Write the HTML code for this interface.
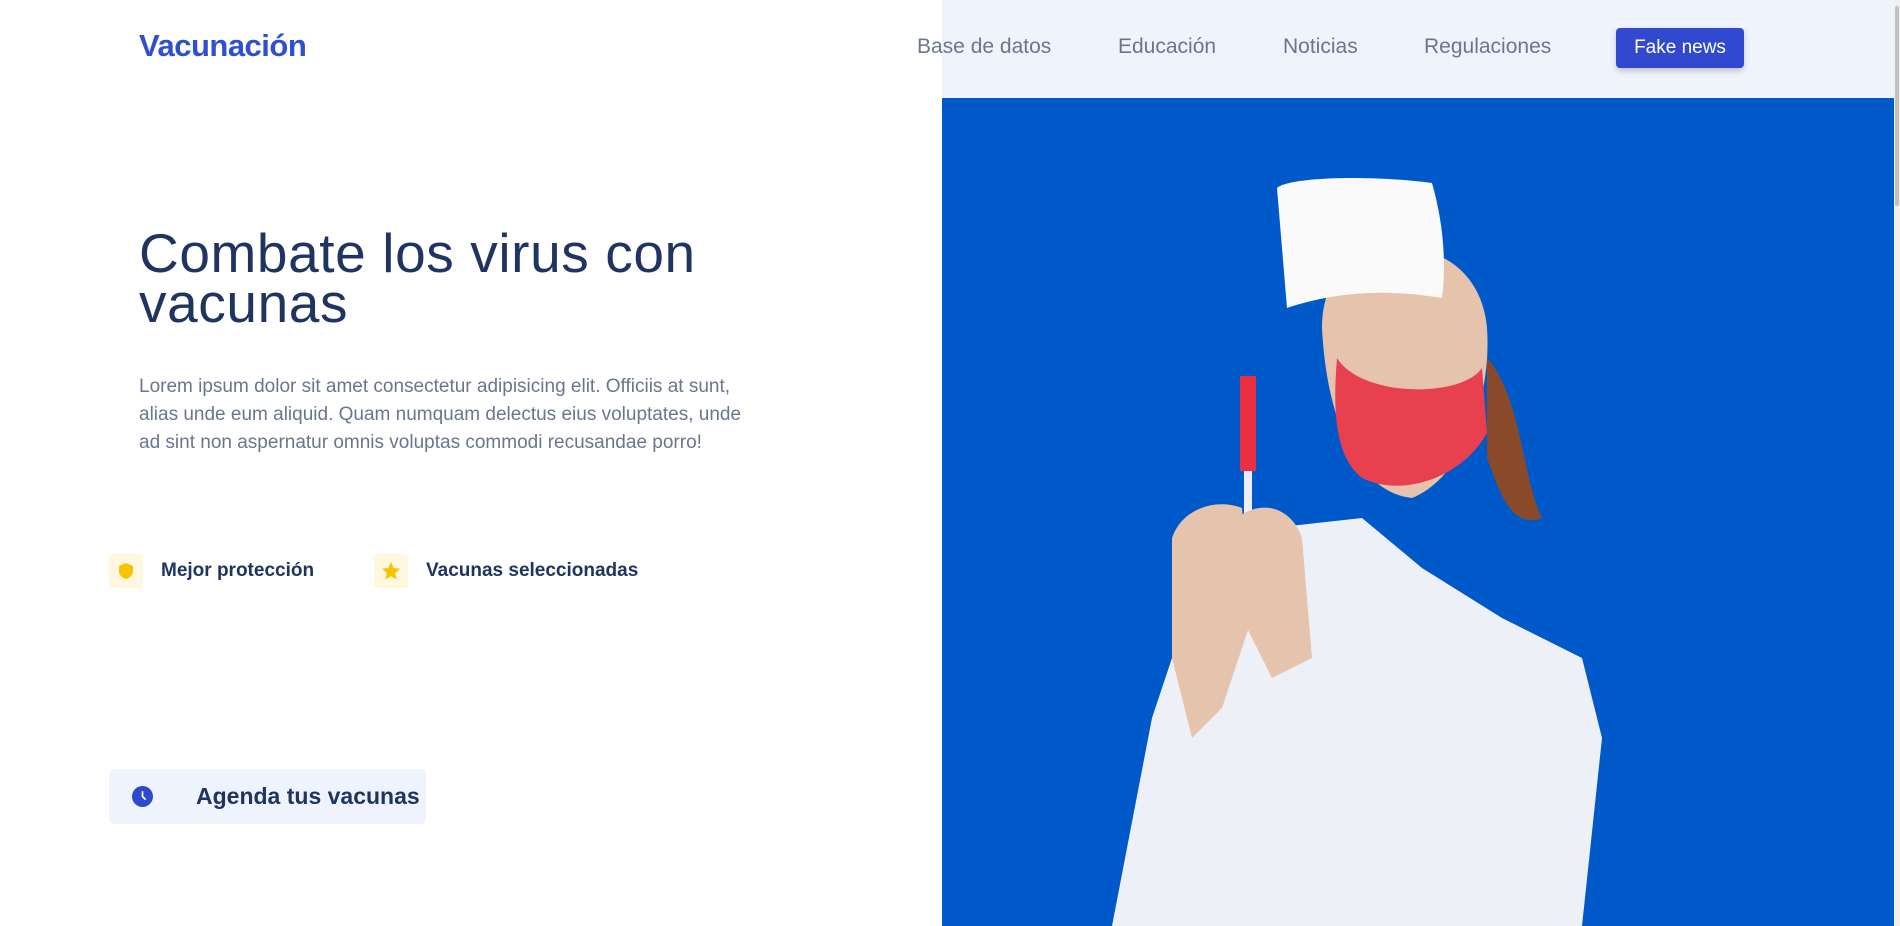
<!DOCTYPE html>
<html><head><meta charset="utf-8"><style>
*{margin:0;padding:0;box-sizing:border-box}
body{width:1900px;height:926px;overflow:hidden;background:#fff;font-family:"Liberation Sans",sans-serif;position:relative}
.logo{position:absolute;left:139px;top:28px;font-size:31px;font-weight:bold;color:#2f4fcf;letter-spacing:-0.5px}
.hdr{position:absolute;left:942px;top:0;width:952px;height:98px;background:#eff3fb}
.nav{position:absolute;top:35px;font-size:21px;color:#6b7591}
.btn{position:absolute;left:1616px;top:28px;width:128px;height:40px;background:#3049cf;color:#fff;font-size:19px;border-radius:4px;text-align:center;line-height:40px;box-shadow:0 3px 6px rgba(0,0,0,.2)}
.pic{position:absolute;left:942px;top:98px;width:952px;height:828px;background:#0059c8;overflow:hidden}
.sb{position:absolute;right:0;top:0;width:6px;height:926px;background:#f0f0f0}
.sb div{position:absolute;left:1px;top:6px;width:4px;height:200px;background:#c1c1c1;border-radius:2px}
h1{position:absolute;left:139px;top:228px;font-size:55px;line-height:50px;color:#1f3461;font-weight:normal;letter-spacing:0.6px;width:700px}
p{position:absolute;left:139px;top:373px;width:800px;font-size:19px;line-height:28px;color:#6a7690;white-space:nowrap}
.f{position:absolute;top:554px;display:flex;align-items:center;font-size:19px;font-weight:bold;color:#1f3461}
.ic{width:34px;height:34px;background:#fff7de;border-radius:3px;margin-right:18px;display:flex;align-items:center;justify-content:center}
.ag{position:absolute;left:109px;top:769px;width:317px;height:55px;background:#eef3fd;border-radius:6px;font-size:23px;font-weight:bold;color:#1f3461;line-height:55px}
</style></head><body>
<div class="logo">Vacunación</div>
<div class="hdr"></div>
<div class="nav" style="left:917px">Base de datos</div>
<div class="nav" style="left:1118px">Educación</div>
<div class="nav" style="left:1283px">Noticias</div>
<div class="nav" style="left:1424px">Regulaciones</div>
<div class="btn">Fake news</div>
<h1>Combate los virus con<br>vacunas</h1>
<p>Lorem ipsum dolor sit amet consectetur adipisicing elit. Officiis at sunt,<br>alias unde eum aliquid. Quam numquam delectus eius voluptates, unde<br>ad sint non aspernatur omnis voluptas commodi recusandae porro!</p>
<div class="f" style="left:109px"><div class="ic"><svg width="16" height="18" viewBox="0 0 16 18"><path d="M8 1L15 4V9C15 13 12 16 8 17C4 16 1 13 1 9V4Z" fill="#f8c400"/></svg></div>Mejor protección</div>
<div class="f" style="left:374px"><div class="ic"><svg width="20" height="20" viewBox="0 0 20 20"><path d="M10 1L12.6 7 19 7.6 14.2 12 15.6 18.5 10 15.2 4.4 18.5 5.8 12 1 7.6 7.4 7Z" fill="#f8c400"/></svg></div>Vacunas seleccionadas</div>
<div class="ag"><svg style="position:absolute;left:23px;top:17px" width="21" height="21" viewBox="0 0 20 20"><circle cx="10" cy="10" r="10" fill="#2f49cc"/><path d="M10 5V10L13 13" stroke="#fff" stroke-width="1.6" fill="none"/></svg><span style="position:absolute;left:87px">Agenda tus vacunas</span></div>
<div class="pic"><svg width="952" height="828" viewBox="0 0 952 828">
<path d="M170 828L210 620 250 500 330 430 420 420 480 470 560 520 640 560 660 640 640 828Z" fill="#eef0f8"/>
<path d="M380 230C380 170 420 150 460 150 500 150 540 175 545 230 550 300 520 380 470 400 420 395 385 330 380 230Z" fill="#e6c3ad"/>
<path d="M395 260C420 300 520 300 540 270L545 335C520 380 460 400 420 380 395 360 390 320 395 260Z" fill="#e8404f"/>
<path d="M335 90C345 80 420 76 490 85 500 120 505 160 500 200 440 190 390 195 345 210Z" fill="#fafafa"/>
<path d="M545 260C580 300 580 380 600 420 570 430 560 400 545 360Z" fill="#8a4a2a"/>
<rect x="298" y="278" width="16" height="95" fill="#e83040"/><rect x="302" y="373" width="8" height="60" fill="#eef"/>
<path d="M230 440C240 410 275 400 300 410L310 520 280 610 250 640 230 560Z" fill="#e6c3ad"/>
<path d="M295 420C320 400 350 410 360 440L370 560 330 580 300 520Z" fill="#e6c3ad"/>
</svg></div>
<div class="sb"><div></div></div>
</body></html>
